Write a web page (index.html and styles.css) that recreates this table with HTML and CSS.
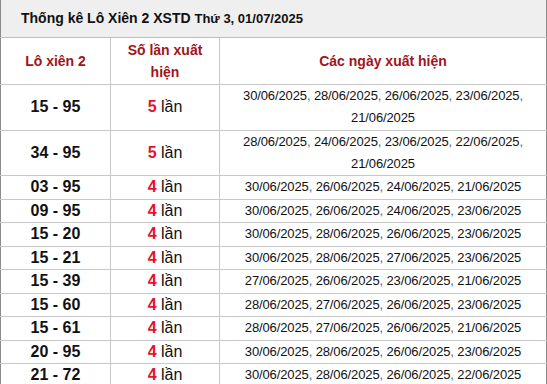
FILE: index.html
```html
<!DOCTYPE html>
<html lang="vi">
<head>
<meta charset="utf-8">
<link rel="stylesheet" href="styles.css">
</head>
<body>
<table class="stats">
  <colgroup>
    <col class="c1"><col class="c2"><col class="c3">
  </colgroup>
  <thead>
    <tr class="title-row">
      <th colspan="3" class="title">Thống kê Lô Xiên 2 XSTD <span class="date">Thứ 3, 01/07/2025</span></th>
    </tr>
    <tr class="head-row">
      <th>Lô xiên 2</th>
      <th>Số lần xuất hiện</th>
      <th>Các ngày xuất hiện</th>
    </tr>
  </thead>
  <tbody>
    <tr><td class="pair">15 - 95</td><td class="cnt"><b>5</b> lần</td><td class="days">30/06/2025<i>,</i> 28/06/2025<i>,</i> 26/06/2025<i>,</i> 23/06/2025<i>,</i> 21/06/2025</td></tr>
    <tr><td class="pair">34 - 95</td><td class="cnt"><b>5</b> lần</td><td class="days">28/06/2025<i>,</i> 24/06/2025<i>,</i> 23/06/2025<i>,</i> 22/06/2025<i>,</i> 21/06/2025</td></tr>
    <tr><td class="pair">03 - 95</td><td class="cnt"><b>4</b> lần</td><td class="days">30/06/2025<i>,</i> 26/06/2025<i>,</i> 24/06/2025<i>,</i> 21/06/2025</td></tr>
    <tr><td class="pair">09 - 95</td><td class="cnt"><b>4</b> lần</td><td class="days">30/06/2025<i>,</i> 26/06/2025<i>,</i> 24/06/2025<i>,</i> 23/06/2025</td></tr>
    <tr><td class="pair">15 - 20</td><td class="cnt"><b>4</b> lần</td><td class="days">30/06/2025<i>,</i> 28/06/2025<i>,</i> 26/06/2025<i>,</i> 23/06/2025</td></tr>
    <tr><td class="pair">15 - 21</td><td class="cnt"><b>4</b> lần</td><td class="days">30/06/2025<i>,</i> 28/06/2025<i>,</i> 27/06/2025<i>,</i> 23/06/2025</td></tr>
    <tr><td class="pair">15 - 39</td><td class="cnt"><b>4</b> lần</td><td class="days">27/06/2025<i>,</i> 26/06/2025<i>,</i> 23/06/2025<i>,</i> 21/06/2025</td></tr>
    <tr><td class="pair">15 - 60</td><td class="cnt"><b>4</b> lần</td><td class="days">28/06/2025<i>,</i> 27/06/2025<i>,</i> 26/06/2025<i>,</i> 23/06/2025</td></tr>
    <tr><td class="pair">15 - 61</td><td class="cnt"><b>4</b> lần</td><td class="days">28/06/2025<i>,</i> 27/06/2025<i>,</i> 26/06/2025<i>,</i> 21/06/2025</td></tr>
    <tr><td class="pair">20 - 95</td><td class="cnt"><b>4</b> lần</td><td class="days">30/06/2025<i>,</i> 28/06/2025<i>,</i> 26/06/2025<i>,</i> 23/06/2025</td></tr>
    <tr><td class="pair">21 - 72</td><td class="cnt"><b>4</b> lần</td><td class="days">30/06/2025<i>,</i> 28/06/2025<i>,</i> 26/06/2025<i>,</i> 22/06/2025</td></tr>
  </tbody>
</table>
</body>
</html>
```
FILE: styles.css
```css
html, body {
  margin: 0;
  padding: 0;
  background: #fff;
}
body {
  font-family: "Liberation Sans", Arial, sans-serif;
  color: #111;
}
.stats {
  width: 547px;
  border-collapse: collapse;
  table-layout: fixed;
  border-left: 1px solid #8a8a8a;
  border-right: 1px solid #8a8a8a;
}
.c1 { width: 110px; }
.c2 { width: 109px; }
.c3 { width: auto; }

.stats th, .stats td {
  border: 1px solid #c8c8c8;
  padding: 0 4px;
  text-align: center;
  vertical-align: middle;
}
.title-row th.title {
  height: 36px;
  background: #efefef;
  text-align: left;
  padding: 0 0 1px 20px;
  font-size: 14px;
  font-weight: bold;
  color: #111;
  border-top: none;
  border-left: 1px solid #8a8a8a;
  border-right: 1px solid #8a8a8a;
  border-bottom: 1px solid #bdbdbd;
}
.title .date {
  font-size: 13px;
  font-weight: bold;
}
.head-row th {
  height: 46px;
  font-size: 14px;
  font-weight: bold;
  line-height: 22px;
  color: #a0141a;
}
.head-row th:first-child { border-left: 1px solid #8a8a8a; }
.head-row th:last-child { border-right: 1px solid #8a8a8a; }
.stats td {
  line-height: 22px;
  padding: 0.25px 4px;
}
.stats td:first-child { border-left: 1px solid #8a8a8a; }
.stats td:last-child { border-right: 1px solid #8a8a8a; }
.pair {
  font-size: 16px;
  font-weight: bold;
  color: #111;
}
.cnt {
  font-size: 16px;
  color: #111;
}
.cnt b {
  color: #e5122d;
  font-weight: bold;
}
.days {
  font-size: 13px;
  letter-spacing: -0.12px;
  color: #111;
}
.days i {
  font-style: normal;
  color: #4a5aa8;
}
```
